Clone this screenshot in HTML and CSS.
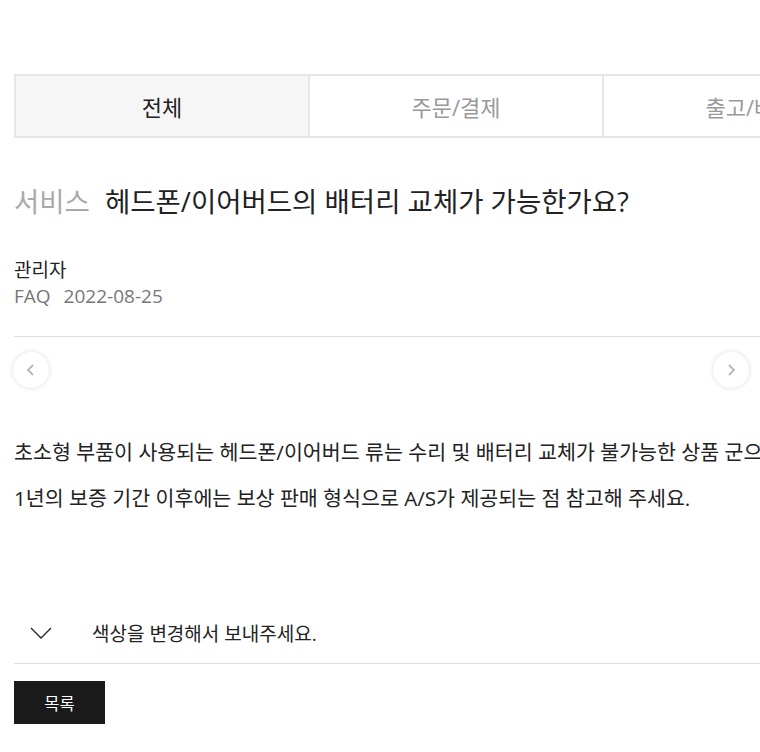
FILE: index.html
```html
<!DOCTYPE html>
<html lang="ko">
<head>
    <meta charset="UTF-8">
    <title>FAQ - 헤드폰/이어버드의 배터리 교체가 가능한가요?</title>
    <link rel="stylesheet" href="styles.css">
</head>
<body>
    <div class="page">
        <ul class="tabs">
            <li class="tab active">전체</li>
            <li class="tab">주문/결제</li>
            <li class="tab">출고/배송</li>
            <li class="tab">교환/반품</li>
        </ul>

        <h2 class="title"><span class="category">서비스</span>헤드폰/이어버드의 배터리 교체가 가능한가요?</h2>

        <div class="meta">
            <div class="writer">관리자</div>
            <div class="info"><span>FAQ</span><span>2022-08-25</span></div>
        </div>

        <div class="pager">
            <button class="circle" type="button">
                <svg width="12" height="14" viewBox="0 0 12 14"><path d="M8 2 L3 7 L8 12" fill="none" stroke="#b5b5b5" stroke-width="1.8"/></svg>
            </button>
            <button class="circle" type="button">
                <svg width="12" height="14" viewBox="0 0 12 14"><path d="M4 2 L9 7 L4 12" fill="none" stroke="#b5b5b5" stroke-width="1.8"/></svg>
            </button>
        </div>

        <div class="content">
            <p>초소형 부품이 사용되는 헤드폰/이어버드 류는 수리 및 배터리 교체가 불가능한 상품 군으로,</p>
            <p>1년의 보증 기간 이후에는 보상 판매 형식으로 A/S가 제공되는 점 참고해 주세요.</p>
        </div>

        <div class="next">
            <svg class="arrow" width="22" height="12" viewBox="0 0 22 12"><path d="M1 1 L11 11 L21 1" fill="none" stroke="#222" stroke-width="1.3"/></svg>
            <span>색상을 변경해서 보내주세요.</span>
        </div>

        <button class="list-btn" type="button">목록</button>
    </div>
</body>
</html>
```

FILE: styles.css
```css
html, body {
    overflow: hidden;
}
body {
    margin: 0;
    background: #fff;
    color: #222;
    font-family: "Open Sans", "Noto Sans CJK KR", sans-serif;
}
.page {
    width: 1180px;
    padding: 74px 0 0 14px;
}
.tabs {
    display: flex;
    list-style: none;
    margin: 0;
    padding: 0;
    border-top: 2px solid #e6e6e6;
    border-bottom: 2px solid #e6e6e6;
    border-left: 2px solid #e6e6e6;
}
.tab {
    width: 292px;
    height: 60px;
    display: flex;
    align-items: center;
    justify-content: center;
    font-size: 22px;
    color: #999;
    border-right: 2px solid #e6e6e6;
}
.tab.active {
    background: #f6f6f6;
    color: #222;
}
.title {
    margin: 46px 0 0;
    font-size: 27.5px;
    font-weight: 400;
    line-height: 36px;
}
.category {
    color: #aaa;
    margin-right: 15px;
}
.meta {
    margin-top: 37px;
    font-size: 19px;
    line-height: 26px;
    padding-bottom: 27px;
    border-bottom: 1px solid #ddd;
}
.info {
    color: #777;
}
.info span {
    margin-right: 13px;
}
.pager {
    width: 736px;
    margin-left: -1px;
    padding-top: 15px;
    display: flex;
    justify-content: space-between;
}
.circle {
    width: 36px;
    height: 36px;
    border-radius: 50%;
    border: none;
    background: #fff;
    box-shadow: 0 0 5px rgba(0,0,0,0.14);
    display: flex;
    align-items: center;
    justify-content: center;
    padding: 0;
}
.content {
    margin-top: 41px;
    font-size: 20.6px;
}
.content p {
    margin: 0;
    line-height: 46px;
    white-space: nowrap;
}
.next {
    margin-top: 82px;
    display: flex;
    align-items: center;
    height: 60px;
    border-bottom: 1px solid #ddd;
    font-size: 19px;
}
.arrow {
    margin: 0 40px 0 16px;
}
.list-btn {
    margin-top: 17px;
    width: 91px;
    height: 43px;
    background: #1a1a1a;
    color: #fff;
    border: none;
    font-family: inherit;
    font-size: 16.5px;
}
```
